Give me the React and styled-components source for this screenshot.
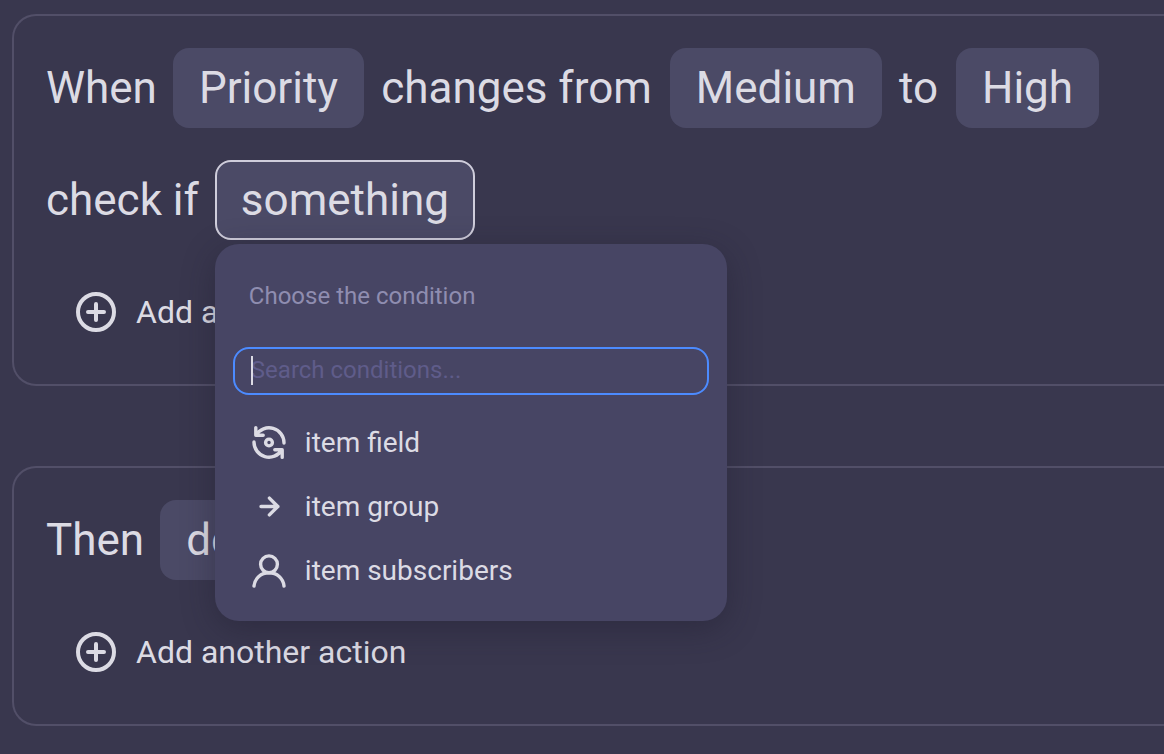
import React from 'react';
import { styled, createGlobalStyle } from 'styled-components';

const GlobalStyle = createGlobalStyle`
  * {
    box-sizing: border-box;
  }

  body {
    margin: 0;
    background-color: #39374e;
    color: #dcdbe4;
    font-family: Roboto, "Liberation Sans", sans-serif;
  }
`;

const Container = styled.main`
  display: flex;
  flex-direction: column;
  gap: 80px;
  padding: 14px 0 28px 12px;
`;

const Panel = styled.section`
  display: flex;
  flex-direction: column;
  gap: 32px;
  padding: 32px;
  border: 2px solid #524f68;
  border-right: none;
  border-radius: 24px 0 0 24px;
`;

const Sentence = styled.div`
  display: flex;
  flex-wrap: wrap;
  align-items: center;
  gap: 16px;
  font-size: 44px;
  line-height: 76px;
`;

const Chip = styled.button`
  height: 80px;
  padding: 0 24px;
  border: 2px solid ${(props) => (props.$active ? '#cfcddb' : 'transparent')};
  border-radius: 16px;
  background-color: #4b4a66;
  color: inherit;
  font: inherit;
  white-space: nowrap;
  cursor: pointer;
`;

const Word = styled.span`
  white-space: nowrap;

  ${Chip} + & {
    margin: 0 2px 0 1px;
  }
`;

const ChipWrapper = styled.div`
  display: flex;
  position: relative;
`;

const AddButton = styled.button`
  display: flex;
  align-items: center;
  align-self: flex-start;
  gap: 20px;
  height: 80px;
  padding: 0 30px;
  border: none;
  background: none;
  color: inherit;
  font: inherit;
  font-size: 32px;
  cursor: pointer;
`;

const Icon = styled.svg`
  flex: none;
  width: 40px;
  height: 40px;
  fill: none;
  stroke: currentColor;
  stroke-width: ${(props) => props.$weight || 3};
  stroke-linecap: round;
  stroke-linejoin: round;
`;

const Popover = styled.div`
  position: absolute;
  top: calc(100% + 4px);
  left: 0;
  z-index: 2;
  width: 512px;
  padding: 18px;
  border-radius: 24px;
  background-color: #474564;
  box-shadow: 0 8px 32px rgba(30, 28, 44, 0.4);
`;

const PopoverTitle = styled.label`
  display: block;
  padding: 0 16px;
  color: #8f8db0;
  font-size: 24px;
  line-height: 68px;
`;

const SearchBox = styled.div`
  position: relative;
  margin: 17px 0 16px;
`;

const Search = styled.input`
  display: block;
  width: 100%;
  height: 48px;
  padding: 0 16px 2px;
  border: 2px solid #4c8bff;
  border-radius: 16px;
  outline: none;
  background: none;
  color: inherit;
  caret-color: transparent;
  font: inherit;
  font-size: 24px;
  line-height: 28px;

  &::placeholder {
    color: #5f5c8a;
    opacity: 1;
  }
`;

const Caret = styled.span`
  position: absolute;
  top: 9px;
  left: 18px;
  width: 2px;
  height: 29px;
  background-color: #dcdbe4;
`;

const Options = styled.ul`
  margin: 0;
  padding: 0;
  list-style: none;
`;

const Option = styled.button`
  display: flex;
  align-items: center;
  gap: 16px;
  width: 100%;
  height: 64px;
  padding: 0 16px;
  border: none;
  background: none;
  color: inherit;
  font: inherit;
  font-size: 28px;
  cursor: pointer;
`;

const PlusIcon = () => (
  <Icon viewBox="0 0 40 40" $weight={4} aria-hidden="true">
    <circle cx="20" cy="20" r="18" />
    <path d="M12 20h16M20 12v16" />
  </Icon>
);

const FieldIcon = () => (
  <Icon viewBox="0 0 40 40" $weight={3.4} aria-hidden="true">
    <path d="M35 20A15 15 0 0 0 7.2 12M6.8 4.6v7.6h7.4" />
    <path d="M5 19A15 15 0 0 0 32.8 27M33.2 34.4v-7.6h-7.4" />
    <circle cx="20" cy="19.5" r="3.4" />
  </Icon>
);

const GroupIcon = () => (
  <Icon viewBox="0 0 40 40" $weight={3.4} aria-hidden="true">
    <path d="M12 19.5h17M20.4 11.1l8.4 8.4-8.4 8.4" />
  </Icon>
);

const SubscribersIcon = () => (
  <Icon viewBox="0 0 40 40" $weight={3.4} aria-hidden="true">
    <circle cx="20" cy="13.3" r="8.4" />
    <path d="M5 35C5.8 27.2 12 21.8 20 21.8S34.2 27.2 35 35" />
  </Icon>
);

const conditions = [
  { label: 'item field', icon: FieldIcon },
  { label: 'item group', icon: GroupIcon },
  { label: 'item subscribers', icon: SubscribersIcon },
];

const ConditionPicker = () => {
  return (
    <Popover>
      <PopoverTitle htmlFor="condition-search">Choose the condition</PopoverTitle>
      <SearchBox>
        <Search id="condition-search" type="text" placeholder="Search conditions..." />
        <Caret />
      </SearchBox>
      <Options>
        {conditions.map(({ label, icon: ConditionIcon }) => (
          <li key={label}>
            <Option type="button">
              <ConditionIcon />
              {label}
            </Option>
          </li>
        ))}
      </Options>
    </Popover>
  );
};

const App = () => {
  return (
    <>
      <GlobalStyle />
      <Container>
        <Panel>
          <Sentence>
            <Word>When</Word>
            <Chip type="button">Priority</Chip>
            <Word>changes from</Word>
            <Chip type="button">Medium</Chip>
            <Word>to</Word>
            <Chip type="button">High</Chip>
          </Sentence>
          <Sentence>
            <Word>check if</Word>
            <ChipWrapper>
              <Chip type="button" $active aria-expanded="true">
                something
              </Chip>
              <ConditionPicker />
            </ChipWrapper>
          </Sentence>
          <AddButton type="button">
            <PlusIcon />
            Add another condition
          </AddButton>
        </Panel>
        <Panel>
          <Sentence>
            <Word>Then</Word>
            <Chip type="button">do something</Chip>
          </Sentence>
          <AddButton type="button">
            <PlusIcon />
            Add another action
          </AddButton>
        </Panel>
      </Container>
    </>
  );
};

export default App;
